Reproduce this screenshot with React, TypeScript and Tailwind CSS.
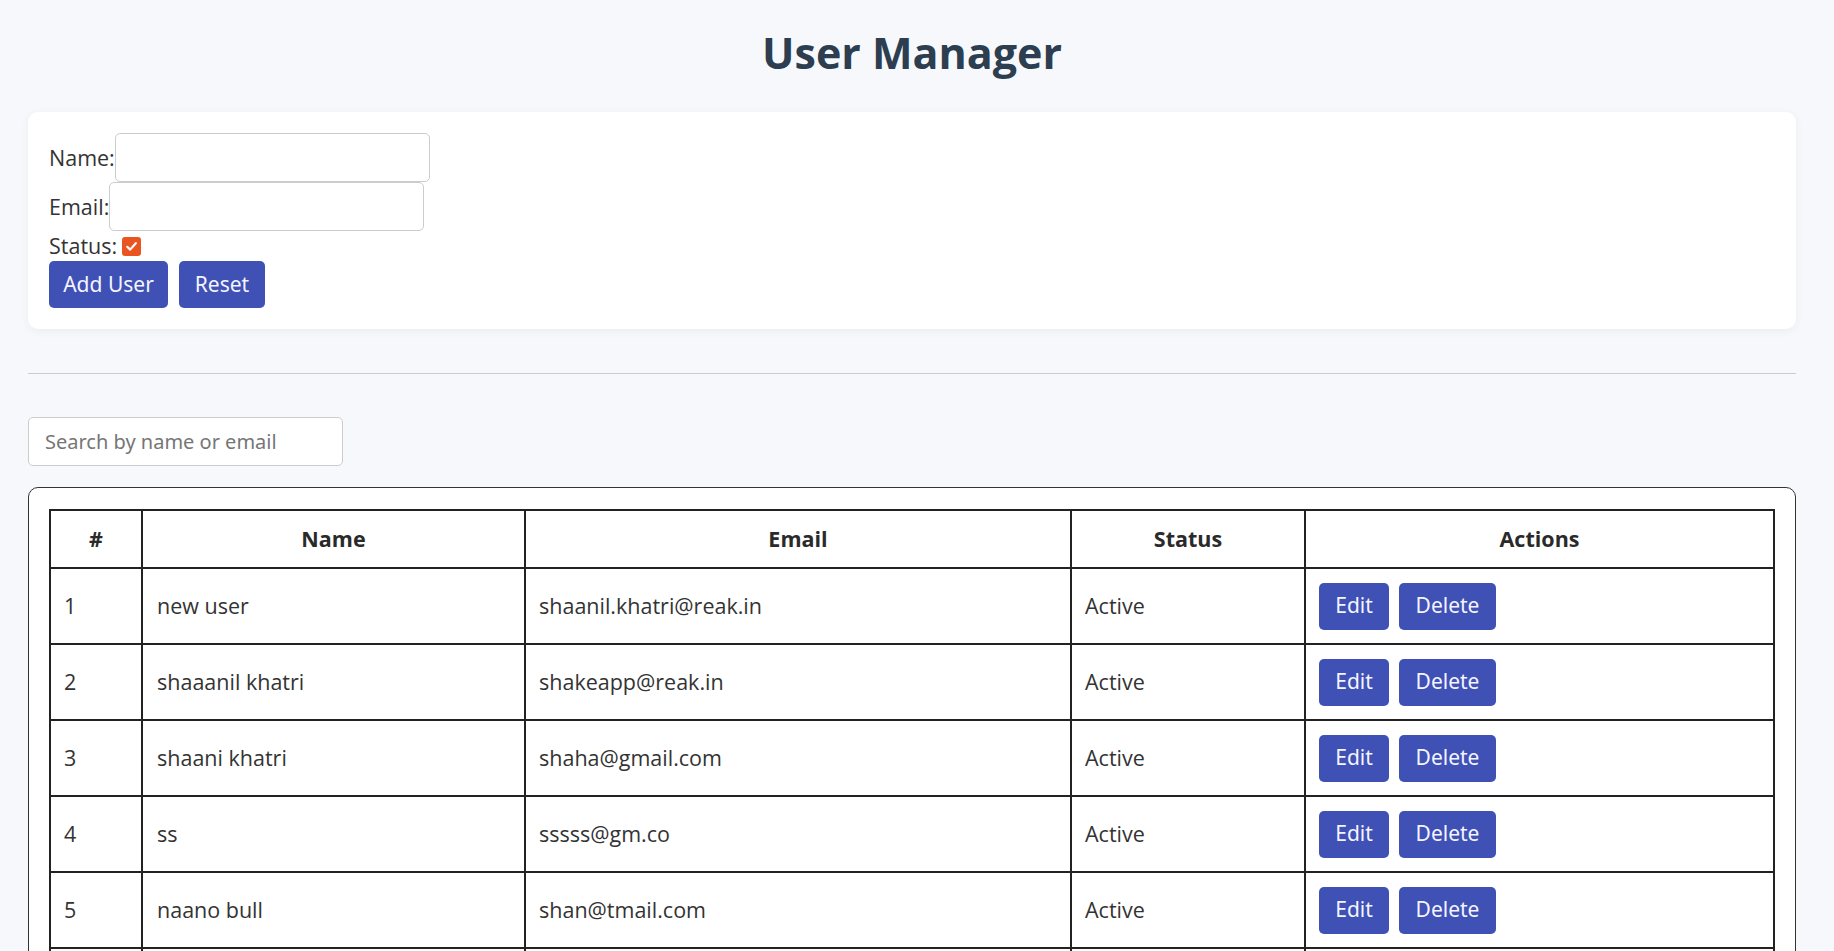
import React from "react";

const users = [
  { id: 1, name: "new user", email: "shaanil.khatri@reak.in", status: "Active" },
  { id: 2, name: "shaaanil khatri", email: "shakeapp@reak.in", status: "Active" },
  { id: 3, name: "shaani khatri", email: "shaha@gmail.com", status: "Active" },
  { id: 4, name: "ss", email: "sssss@gm.co", status: "Active" },
  { id: 5, name: "naano bull", email: "shan@tmail.com", status: "Active" },
  { id: 6, name: "test user", email: "test@reak.in", status: "Active" },
];

const btn =
  "h-[47px] rounded-[5px] bg-[#3f51b5] text-[#f4f4ff] text-[21px] font-['Noto_Sans',sans-serif] flex items-center justify-center";

export default function App() {
  return (
    <div className="min-h-screen bg-[#f7f8fc] pl-[28px] pr-[38px] pt-[24px] font-['Open_Sans',sans-serif] text-[#333]">
      <h1 className="h-[58px] text-center text-[43px] leading-[58px] font-bold text-[#2c3e50]">
        User Manager
      </h1>

      <div className="mt-[30px] rounded-[10px] bg-white pl-[21px] pr-[21px] pt-[21px] pb-[21px] shadow-[0_2px_10px_rgba(0,0,0,0.05)]">
        <div className="flex h-[49px] items-center">
          <span className="text-[21.5px] leading-[28px]">Name:</span>
          <input className="h-[49px] w-[315px] rounded-[5px] border border-[#cccccc] bg-white outline-none" />
        </div>
        <div className="flex h-[49px] items-center">
          <span className="text-[21.5px] leading-[28px]">Email:</span>
          <input className="h-[49px] w-[315px] rounded-[5px] border border-[#cccccc] bg-white outline-none" />
        </div>
        <div className="mt-[1px] flex h-[28px] items-center">
          <span className="text-[21.5px] leading-[28px]">Status:</span>
          <span className="ml-[5px] flex h-[19px] w-[19px] items-center justify-center rounded-[3px] bg-[#e95420]">
            <svg width="13" height="13" viewBox="0 0 13 13" fill="none">
              <path d="M2.2 6.8 L5.2 9.6 L10.8 3.2" stroke="white" strokeWidth="2.2" strokeLinecap="round" strokeLinejoin="round" />
            </svg>
          </span>
        </div>
        <div className="mt-[1px] flex gap-[11px]">
          <button className={btn + " w-[119px]"}>Add User</button>
          <button className={btn + " w-[86px]"}>Reset</button>
        </div>
      </div>

      <hr className="mt-[44px] border-0 border-t border-[#cccccc]" />

      <input
        placeholder="Search by name or email"
        className="mt-[43px] block h-[49px] w-[315px] rounded-[5px] border border-[#cccccc] bg-white pl-[16px] text-[20px] font-['Noto_Sans',sans-serif] outline-none placeholder:text-[#767676]"
      />

      <div className="mt-[21px] rounded-[10px] border-[1.5px] border-[#333] bg-white px-[20px] pt-[21px] pb-[20px]">
        <table className="w-full table-fixed border-collapse text-[21.5px]">
          <colgroup>
            <col className="w-[92px]" />
            <col className="w-[383px]" />
            <col className="w-[546px]" />
            <col className="w-[234px]" />
            <col />
          </colgroup>
          <thead>
            <tr>
              {["#", "Name", "Email", "Status", "Actions"].map((h) => (
                <th key={h} className="h-[58px] border-2 border-[#222] text-center font-bold text-[#2a2a2a]">
                  {h}
                </th>
              ))}
            </tr>
          </thead>
          <tbody>
            {users.map((u) => (
              <tr key={u.id}>
                <td className="h-[76px] border-2 border-[#222] px-[13px]">{u.id}</td>
                <td className="h-[76px] border-2 border-[#222] px-[14px]">{u.name}</td>
                <td className="h-[76px] border-2 border-[#222] px-[13px]">{u.email}</td>
                <td className="h-[76px] border-2 border-[#222] px-[13px]">{u.status}</td>
                <td className="h-[76px] border-2 border-[#222] px-[13px]">
                  <div className="flex gap-[10px]">
                    <button className={btn + " w-[70px]"}>Edit</button>
                    <button className={btn + " w-[97px]"}>Delete</button>
                  </div>
                </td>
              </tr>
            ))}
          </tbody>
        </table>
      </div>
    </div>
  );
}
